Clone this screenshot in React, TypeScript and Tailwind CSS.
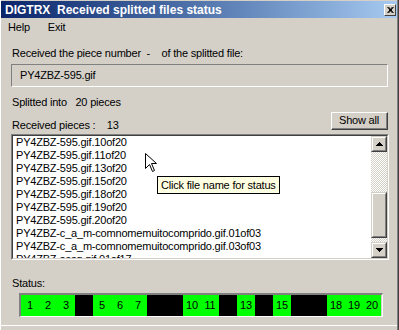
import React from 'react'

const files = [
  'PY4ZBZ-595.gif.10of20',
  'PY4ZBZ-595.gif.11of20',
  'PY4ZBZ-595.gif.13of20',
  'PY4ZBZ-595.gif.15of20',
  'PY4ZBZ-595.gif.18of20',
  'PY4ZBZ-595.gif.19of20',
  'PY4ZBZ-595.gif.20of20',
  'PY4ZBZ-c_a_m-comnomemuitocomprido.gif.01of03',
  'PY4ZBZ-c_a_m-comnomemuitocomprido.gif.03of03',
  'PY4ZBZ-sesg.gif.01of17',
]

const received = [1, 2, 3, 5, 6, 7, 10, 11, 13, 15, 18, 19, 20]

function Arrow({ down }: { down?: boolean }) {
  return (
    <svg width="7" height="4" viewBox="0 0 7 4" className={down ? 'rotate-180' : ''}>
      <path d="M3 0h1v1h1v1h1v1h1v1H0V3h1V2h1V1h1z" fill="#000" />
    </svg>
  )
}

function ScrollButton({ down }: { down?: boolean }) {
  return (
    <div className="flex h-[16px] w-[16px] items-center justify-center border border-t-[#d4d0c8] border-l-[#d4d0c8] border-r-[#404040] border-b-[#404040] bg-[#d4d0c8]">
      <div className="flex h-full w-full items-center justify-center border border-t-white border-l-white border-r-[#808080] border-b-[#808080]">
        <Arrow down={down} />
      </div>
    </div>
  )
}

export default function App() {
  return (
    <div className="h-[330px] w-[399px] overflow-hidden border-r border-[#404040] bg-[#d4d0c8] font-['Liberation_Sans',Arial,sans-serif] text-[11px] tracking-[-0.2px] text-black">
      <div className="relative h-full border-r border-l border-l-white border-r-[#808080] pt-[1px]">
        {/* title bar */}
        <div className="flex h-[17px] items-center justify-between bg-gradient-to-r from-[#0a246a] to-[#a6caf0] pl-[4px] pr-[1px]">
          <span className="whitespace-pre text-[12px] font-bold tracking-normal text-white">DIGTRX  Received splitted files status</span>
          <div className="flex h-[12px] w-[12px] items-center justify-center border border-t-white border-l-white border-r-[#404040] border-b-[#404040] bg-[#d4d0c8]">
            <svg width="7" height="6" viewBox="0 0 7 6">
              <path d="M0.5 0l5 6M1.5 0l5 6M6.5 0l-5 6M5.5 0l-5 6" stroke="#000" strokeWidth="1" />
            </svg>
          </div>
        </div>

        {/* menu */}
        <div className="flex h-[19px] items-center pl-[7px]">
          <span>Help</span>
          <span className="ml-[18px]">Exit</span>
        </div>

        <div className="pl-[10px]">
          <div className="mt-[9px] h-[14px] whitespace-pre leading-[14px] pl-[1px]">Received the piece number  -    of the splitted file:</div>

          <div className="mt-[4px] flex h-[23px] w-[377px] items-center border border-t-[#808080] border-l-[#808080] border-r-white border-b-white pl-[8px]">
            PY4ZBZ-595.gif
          </div>

          <div className="mt-[8px] h-[14px] whitespace-pre leading-[14px] pl-[1px]">Splitted into   20 pieces</div>

          <div className="mt-[3px] flex h-[20px] w-[377px] items-start justify-between">
            <span className="whitespace-pre pt-[6px] leading-[14px] pl-[1px]">Received pieces :    13</span>
            <div className="flex h-[18px] w-[57px] items-center justify-center border border-t-white border-l-white border-r-[#404040] border-b-[#404040]">
              <div className="flex h-full w-full items-center justify-center border-r border-b border-[#808080]">Show all</div>
            </div>
          </div>

          {/* list box */}
          <div className="relative mt-[2px] h-[126px] w-[378px] border border-t-[#808080] border-l-[#808080] border-r-white border-b-white">
            <div className="flex h-full w-full border border-t-[#404040] border-l-[#404040] border-r-[#d4d0c8] border-b-[#d4d0c8] bg-white">
              <div className="flex-1 overflow-hidden pl-[3px]">
                {files.map((f) => (
                  <div key={f} className="h-[13px] whitespace-nowrap leading-[13px]">{f}</div>
                ))}
              </div>
              <div className="flex w-[16px] flex-col">
                <ScrollButton />
                <div className="h-[40px] bg-[repeating-conic-gradient(#ffffff_0_25%,#d4d0c8_0_50%)] bg-[length:2px_2px]" />
                <div className="h-[46px] border border-t-[#d4d0c8] border-l-[#d4d0c8] border-r-[#404040] border-b-[#404040] bg-[#d4d0c8]">
                  <div className="h-full border border-t-white border-l-white border-r-[#808080] border-b-[#808080]" />
                </div>
                <div className="flex-1 bg-[repeating-conic-gradient(#ffffff_0_25%,#d4d0c8_0_50%)] bg-[length:2px_2px]" />
                <ScrollButton down />
              </div>
            </div>
          </div>

          <div className="mt-[16px] h-[14px] leading-[14px] pl-[1px]">Status:</div>

          <div className="ml-[8px] mt-[3px] flex w-[364px] border-t-2 border-l-2 border-r border-b border-t-[#808080] border-l-[#808080] border-r-white border-b-white">
            {Array.from({ length: 20 }, (_, i) => i + 1).map((n) => {
              const ok = received.includes(n)
              return (
                <div
                  key={n}
                  className={`flex h-[21px] w-[18px] items-center justify-center ${ok ? 'bg-[#00ff00]' : 'bg-black'}`}
                >
                  {ok ? n : ''}
                </div>
              )
            })}
          </div>
        </div>

        <div className="absolute bottom-[4px] left-0 right-0 h-px bg-white" />

        {/* tooltip */}
        <div className="absolute left-[156px] top-[176px] flex h-[18px] w-[123px] items-center whitespace-nowrap border border-black bg-[#ffffe1] pl-[3px]">
          Click file name for status
        </div>

        {/* mouse cursor */}
        <svg className="absolute left-[144px] top-[153px]" width="13" height="21" viewBox="0 0 13 21">
          <path
            d="M0.5 0.5L0.5 15.5L4.5 11.5L7.5 18.5L9.5 17.5L6.5 10.5L11.5 10.5Z"
            fill="#fff"
            stroke="#000"
            strokeWidth="1"
          />
        </svg>
      </div>
    </div>
  )
}
